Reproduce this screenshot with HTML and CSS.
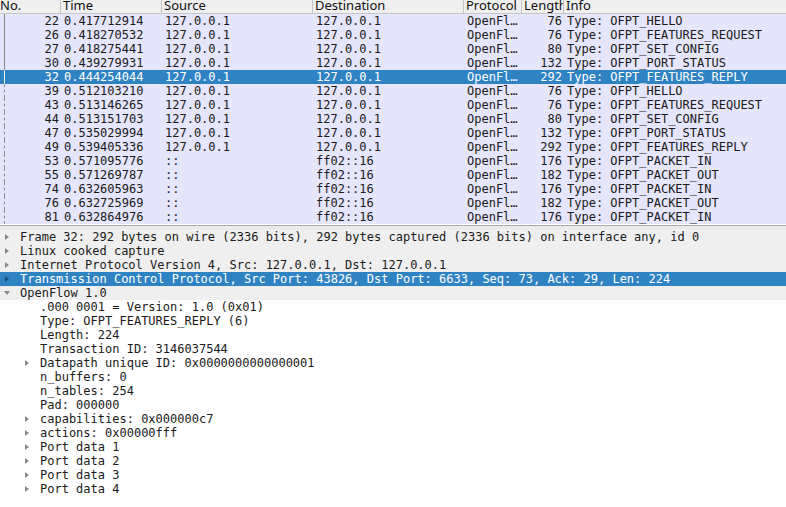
FILE: index.html
```html
<!DOCTYPE html>
<html>
<head>
<meta charset="utf-8">
<link rel="stylesheet" href="styles.css">
</head>
<body>
<div class="app">
  <div class="list">
    <div class="hdr">
      <div class="hc c-no">No.</div>
      <div class="hc c-time">Time</div>
      <div class="hc c-src">Source</div>
      <div class="hc c-dst">Destination</div>
      <div class="hc c-proto">Protocol</div>
      <div class="hc c-len">Length</div>
      <div class="hc c-info">Info</div>
    </div>
    <div class="rows">
      <div class="row solid"><span class="c-no num">22</span><span class="c-time">0.417712914</span><span class="c-src">127.0.0.1</span><span class="c-dst">127.0.0.1</span><span class="c-proto">OpenFl…</span><span class="c-len num">76</span><span class="c-info">Type: OFPT_HELLO</span></div>
      <div class="row solid"><span class="c-no num">26</span><span class="c-time">0.418270532</span><span class="c-src">127.0.0.1</span><span class="c-dst">127.0.0.1</span><span class="c-proto">OpenFl…</span><span class="c-len num">76</span><span class="c-info">Type: OFPT_FEATURES_REQUEST</span></div>
      <div class="row solid"><span class="c-no num">27</span><span class="c-time">0.418275441</span><span class="c-src">127.0.0.1</span><span class="c-dst">127.0.0.1</span><span class="c-proto">OpenFl…</span><span class="c-len num">80</span><span class="c-info">Type: OFPT_SET_CONFIG</span></div>
      <div class="row solid"><span class="c-no num">30</span><span class="c-time">0.439279931</span><span class="c-src">127.0.0.1</span><span class="c-dst">127.0.0.1</span><span class="c-proto">OpenFl…</span><span class="c-len num">132</span><span class="c-info">Type: OFPT_PORT_STATUS</span></div>
      <div class="row sel"><span class="c-no num">32</span><span class="c-time">0.444254044</span><span class="c-src">127.0.0.1</span><span class="c-dst">127.0.0.1</span><span class="c-proto">OpenFl…</span><span class="c-len num">292</span><span class="c-info">Type: OFPT_FEATURES_REPLY</span></div>
      <div class="row"><span class="c-no num">39</span><span class="c-time">0.512103210</span><span class="c-src">127.0.0.1</span><span class="c-dst">127.0.0.1</span><span class="c-proto">OpenFl…</span><span class="c-len num">76</span><span class="c-info">Type: OFPT_HELLO</span></div>
      <div class="row"><span class="c-no num">43</span><span class="c-time">0.513146265</span><span class="c-src">127.0.0.1</span><span class="c-dst">127.0.0.1</span><span class="c-proto">OpenFl…</span><span class="c-len num">76</span><span class="c-info">Type: OFPT_FEATURES_REQUEST</span></div>
      <div class="row"><span class="c-no num">44</span><span class="c-time">0.513151703</span><span class="c-src">127.0.0.1</span><span class="c-dst">127.0.0.1</span><span class="c-proto">OpenFl…</span><span class="c-len num">80</span><span class="c-info">Type: OFPT_SET_CONFIG</span></div>
      <div class="row"><span class="c-no num">47</span><span class="c-time">0.535029994</span><span class="c-src">127.0.0.1</span><span class="c-dst">127.0.0.1</span><span class="c-proto">OpenFl…</span><span class="c-len num">132</span><span class="c-info">Type: OFPT_PORT_STATUS</span></div>
      <div class="row"><span class="c-no num">49</span><span class="c-time">0.539405336</span><span class="c-src">127.0.0.1</span><span class="c-dst">127.0.0.1</span><span class="c-proto">OpenFl…</span><span class="c-len num">292</span><span class="c-info">Type: OFPT_FEATURES_REPLY</span></div>
      <div class="row"><span class="c-no num">53</span><span class="c-time">0.571095776</span><span class="c-src">::</span><span class="c-dst">ff02::16</span><span class="c-proto">OpenFl…</span><span class="c-len num">176</span><span class="c-info">Type: OFPT_PACKET_IN</span></div>
      <div class="row"><span class="c-no num">55</span><span class="c-time">0.571269787</span><span class="c-src">::</span><span class="c-dst">ff02::16</span><span class="c-proto">OpenFl…</span><span class="c-len num">182</span><span class="c-info">Type: OFPT_PACKET_OUT</span></div>
      <div class="row"><span class="c-no num">74</span><span class="c-time">0.632605963</span><span class="c-src">::</span><span class="c-dst">ff02::16</span><span class="c-proto">OpenFl…</span><span class="c-len num">176</span><span class="c-info">Type: OFPT_PACKET_IN</span></div>
      <div class="row"><span class="c-no num">76</span><span class="c-time">0.632725969</span><span class="c-src">::</span><span class="c-dst">ff02::16</span><span class="c-proto">OpenFl…</span><span class="c-len num">182</span><span class="c-info">Type: OFPT_PACKET_OUT</span></div>
      <div class="row"><span class="c-no num">81</span><span class="c-time">0.632864976</span><span class="c-src">::</span><span class="c-dst">ff02::16</span><span class="c-proto">OpenFl…</span><span class="c-len num">176</span><span class="c-info">Type: OFPT_PACKET_IN</span></div>
    </div>
  </div>
  <div class="splitter"></div>
  <div class="tree">
    <div class="node top"><span class="arrow right"></span><span class="txt">Frame 32: 292 bytes on wire (2336 bits), 292 bytes captured (2336 bits) on interface any, id 0</span></div>
    <div class="node top"><span class="arrow right"></span><span class="txt">Linux cooked capture</span></div>
    <div class="node top"><span class="arrow right"></span><span class="txt">Internet Protocol Version 4, Src: 127.0.0.1, Dst: 127.0.0.1</span></div>
    <div class="node top sel"><span class="arrow right"></span><span class="txt">Transmission Control Protocol, Src Port: 43826, Dst Port: 6633, Seq: 73, Ack: 29, Len: 224</span></div>
    <div class="node top"><span class="arrow down"></span><span class="txt">OpenFlow 1.0</span></div>
    <div class="node child"><span class="arrow none"></span><span class="txt">.000 0001 = Version: 1.0 (0x01)</span></div>
    <div class="node child"><span class="arrow none"></span><span class="txt">Type: OFPT_FEATURES_REPLY (6)</span></div>
    <div class="node child"><span class="arrow none"></span><span class="txt">Length: 224</span></div>
    <div class="node child"><span class="arrow none"></span><span class="txt">Transaction ID: 3146037544</span></div>
    <div class="node child"><span class="arrow right"></span><span class="txt">Datapath unique ID: 0x0000000000000001</span></div>
    <div class="node child"><span class="arrow none"></span><span class="txt">n_buffers: 0</span></div>
    <div class="node child"><span class="arrow none"></span><span class="txt">n_tables: 254</span></div>
    <div class="node child"><span class="arrow none"></span><span class="txt">Pad: 000000</span></div>
    <div class="node child"><span class="arrow right"></span><span class="txt">capabilities: 0x000000c7</span></div>
    <div class="node child"><span class="arrow right"></span><span class="txt">actions: 0x00000fff</span></div>
    <div class="node child"><span class="arrow right"></span><span class="txt">Port data 1</span></div>
    <div class="node child"><span class="arrow right"></span><span class="txt">Port data 2</span></div>
    <div class="node child"><span class="arrow right"></span><span class="txt">Port data 3</span></div>
    <div class="node child"><span class="arrow right"></span><span class="txt">Port data 4</span></div>
  </div>
</div>
</body>
</html>
```

FILE: styles.css
```css
html, body {
  margin: 0;
  padding: 0;
  background: #ffffff;
}
.app {
  width: 786px;
  height: 507px;
  overflow: hidden;
  display: flex;
  flex-direction: column;
}
.list {
  height: 226px;
  background: #ffffff;
  border-bottom: 1px solid #a9a9a9;
  box-sizing: border-box;
  overflow: hidden;
}
.hdr {
  display: grid;
  grid-template-columns: 61px 101px 151px 151px 58px 42px 1fr;
  height: 13px;
  background: #efefef;
  border-bottom: 1px solid #c6c6c6;
  font-family: "Noto Sans", sans-serif;
  font-size: 13px;
  line-height: 13px;
  color: #111;
  overflow: hidden;
}
.hc {
  border-right: 1px solid #c6c6c6;
  padding-left: 2px;
  white-space: nowrap;
  overflow: hidden;
  margin-top: -1px;
}
.hdr .c-no { padding-left: 0; }
.hdr .c-info { border-right: none; }
.rows {
  font-family: "DejaVu Sans Mono", monospace;
  font-size: 12px;
  color: #1a1a1a;
}
.row {
  display: grid;
  grid-template-columns: 61px 101px 151px 151px 58px 42px 1fr;
  height: 14px;
  line-height: 14px;
  background: #e5e5fb;
  white-space: nowrap;
  position: relative;
}
.row::before {
  content: "";
  position: absolute;
  left: 4px;
  top: 0;
  bottom: 0;
  border-left: 1px dashed #8a8a8a;
}
.row.solid::before {
  border-left: 1px solid #8a8a8a;
}
.row.sel {
  background: #3083c3;
  color: #ffffff;
}
.row.sel::before {
  border-left: 1px solid #ffffff;
}
.row span {
  overflow: hidden;
  padding-left: 3px;
}
.row .num {
  text-align: right;
  padding-left: 0;
  padding-right: 2px;
}
.splitter {
  height: 4px;
  background: #ececec;
}
.tree {
  flex: 1;
  background: #ffffff;
  font-family: "DejaVu Sans Mono", monospace;
  font-size: 12px;
  color: #1a1a1a;
}
.node {
  height: 14px;
  line-height: 14px;
  display: flex;
  align-items: center;
  white-space: nowrap;
}
.node.top {
  background: #efefef;
}
.node.sel {
  background: #3083c3;
  color: #ffffff;
}
.node.child {
  padding-left: 20px;
}
.arrow {
  width: 20px;
  height: 14px;
  flex: none;
  position: relative;
}
.arrow.right::after {
  content: "";
  position: absolute;
  left: 5px;
  top: 4px;
  border-top: 3px solid transparent;
  border-bottom: 3px solid transparent;
  border-left: 4px solid #8a8a8a;
}
.node.sel .arrow.right::after {
  border-left-color: #1f4f78;
}
.arrow.down::after {
  content: "";
  position: absolute;
  left: 4px;
  top: 5px;
  border-left: 3px solid transparent;
  border-right: 3px solid transparent;
  border-top: 4px solid #8a8a8a;
}
.txt {
  white-space: pre;
}
```
